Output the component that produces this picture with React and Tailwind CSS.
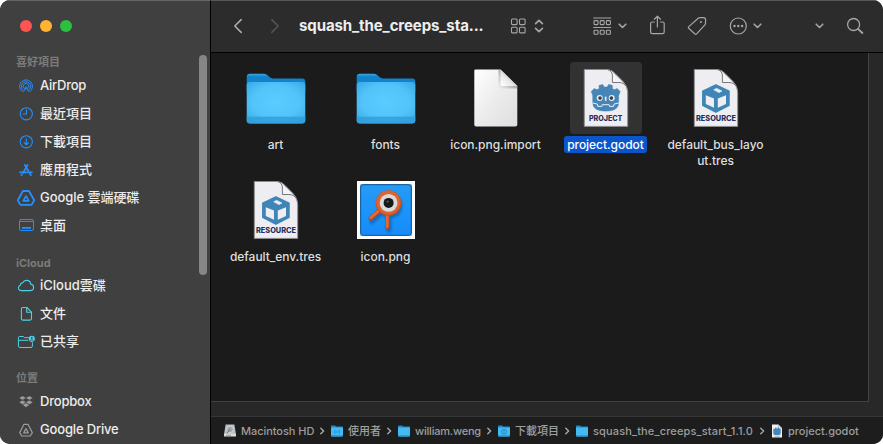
import React from "react";

const SANS = "font-['Inter','Noto_Sans_CJK_TC',sans-serif]";

function Svg({ w, h, vb, className = "", children }) {
  return (
    <svg
      width={w}
      height={h}
      viewBox={vb || `0 0 ${w} ${h}`}
      fill="none"
      stroke="currentColor"
      strokeLinecap="round"
      strokeLinejoin="round"
      className={`block shrink-0 ${className}`}
    >
      {children}
    </svg>
  );
}

/* ---------- sidebar icons (20 x 16 canvas) ---------- */

const AirDropIcon = () => (
  <Svg w={20} h={16}>
    <path d="M6.1 13.6A6.5 6.5 0 1 1 13.9 13.6" strokeWidth="1" />
    <path d="M7.2 12A4.6 4.6 0 1 1 12.8 12" strokeWidth="1" />
    <path d="M8.3 10.4A2.8 2.8 0 1 1 11.7 10.4" strokeWidth="1" />
    <path d="M10 8.3L7.2 14h.2L10 10.2 12.6 14h.2z" fill="currentColor" strokeWidth="0.4" />
  </Svg>
);
const ClockIcon = () => (
  <Svg w={20} h={16}>
    <circle cx="10.3" cy="7.8" r="6.1" strokeWidth="1.1" />
    <path d="M10.5 3.9V8H7.2" strokeWidth="1.1" />
  </Svg>
);
const DownloadIcon = () => (
  <Svg w={20} h={16}>
    <circle cx="10.3" cy="7.8" r="6.1" strokeWidth="1.1" />
    <path d="M10.3 4.7v6M8.1 8.7l2.2 2.2 2.2-2.2" strokeWidth="1.1" />
  </Svg>
);
const AppsIcon = () => (
  <Svg w={20} h={16}>
    <path d="M11.6 3L6.9 11" strokeWidth="1.7" />
    <path d="M8.8 3L14.9 13.3" strokeWidth="1.7" />
    <path d="M4 10.4H11.2M13.8 10.4H16" strokeWidth="1.6" />
    <path d="M5.8 12.7L5.4 13.4" strokeWidth="1.7" />
  </Svg>
);
const DriveIcon = () => (
  <Svg w={20} h={16}>
    <path d="M7 1H13L18.2 10.2 15.6 14.9H4.4L1.8 10.2z" strokeWidth="1.8" />
    <path d="M10 6L12.8 10.9H7.2z" strokeWidth="1.6" />
  </Svg>
);
const DriveSmallIcon = () => (
  <Svg w={20} h={16}>
    <path d="M8 2.3H12L16.3 10.6 14.2 14H5.8L3.7 10.6z" strokeWidth="1.2" />
    <path d="M10 6.6L12.3 10.9H7.7z" strokeWidth="1.2" />
  </Svg>
);
const DesktopIcon = () => (
  <Svg w={20} h={16}>
    <rect x="3.5" y="1.5" width="14" height="11" rx="1.6" strokeWidth="1" />
    <path d="M3.6 3.5H17.4" strokeWidth="1" />
    <rect x="6" y="9" width="9" height="1.8" fill="currentColor" stroke="none" />
  </Svg>
);
const CloudIcon = () => (
  <Svg w={20} h={16}>
    <path
      d="M5.6 12.6C3.6 12.6 2.4 11.4 2.4 9.8C2.4 8.4 3.3 7.5 4.5 7.2C4.3 5.8 5.3 4.8 6.7 4.9C7.4 3.3 8.8 2.4 10.5 2.4C12.7 2.4 14.4 3.9 14.7 6.1C16.4 6.3 17.6 7.6 17.6 9.3C17.6 11.2 16.2 12.6 14.3 12.6Z"
      strokeWidth="1.1"
    />
  </Svg>
);
const DocIcon = () => (
  <Svg w={20} h={16}>
    <path d="M6.6 1.5H10.8L15.5 6.2V12.6Q15.5 14.1 14 14.1H6.9Q5.4 14.1 5.4 12.6V2.9Q5.4 1.5 6.6 1.5z" strokeWidth="1.1" />
    <path d="M10.7 1.7V6.3H15.3" strokeWidth="1.1" />
  </Svg>
);
const SharedIcon = () => (
  <Svg w={20} h={16}>
    <path d="M12.4 3.6H8.4L7.2 2.5H3.7Q2.4 2.5 2.4 3.8V12.1Q2.4 13.5 3.8 13.5H15Q16.4 13.5 16.4 12.1V8.8M2.6 6.3H11.9" strokeWidth="1" />
    <circle cx="15.8" cy="4.8" r="3.1" fill="currentColor" stroke="none" />
    <circle cx="15.8" cy="3.9" r="0.9" fill="#404040" stroke="none" />
    <path d="M14.3 6.5Q15.8 4.9 17.3 6.5" stroke="#404040" strokeWidth="0.8" />
  </Svg>
);
const DropboxIcon = () => (
  <Svg w={20} h={16}>
    <path
      d="M6.6 1.9L10 4 6.6 6.1 3.2 4zM13.4 1.9L16.8 4 13.4 6.1 10 4zM6.6 6.2L10 8.3 6.6 10.4 3.2 8.3zM13.4 6.2L16.8 8.3 13.4 10.4 10 8.3zM6.7 11.1L10 9.1 13.3 11.1 10 13.2z"
      fill="currentColor"
      stroke="#404040"
      strokeWidth="0.2"
    />
  </Svg>
);

function SideHeader({ children, className = "" }) {
  return (
    <div className={`flex h-7 items-center pl-4 text-[11px] font-bold text-[#7b7b7b] ${className}`}>{children}</div>
  );
}

function SideItem({ icon, label, color, track = "" }) {
  return (
    <div className="flex h-7 items-center pl-4">
      <span className={color}>{icon}</span>
      <span className={`ml-1 text-[13px] font-medium whitespace-nowrap text-[#ececec] ${track}`}>{label}</span>
    </div>
  );
}

function Sidebar() {
  const blue = "text-[#2390ff]";
  const cyan = "text-[#49d3e8]";
  const gray = "text-[#9b9b9b]";
  return (
    <aside className="flex w-[211px] shrink-0 flex-col border-r border-black bg-[#404040]">
      <div className="flex h-[51px] shrink-0 items-center gap-2 pl-5">
        <span className="size-3 rounded-full bg-[#ff5450]" />
        <span className="size-3 rounded-full bg-[#ffb332]" />
        <span className="size-3 rounded-full bg-[#2bc040]" />
      </div>
      <div className="flex min-h-0 flex-1 justify-between overflow-hidden">
        <nav className="flex shrink-0 flex-col">
          <SideHeader className="mt-[-3px] mb-[-4px]">喜好項目</SideHeader>
          <SideItem icon={<AirDropIcon />} label="AirDrop" color={blue} track="tracking-[-0.25px]" />
          <SideItem icon={<ClockIcon />} label="最近項目" color={blue} />
          <SideItem icon={<DownloadIcon />} label="下載項目" color={blue} />
          <SideItem icon={<AppsIcon />} label="應用程式" color={blue} />
          <SideItem icon={<DriveIcon />} label="Google 雲端硬碟" color={blue} track="tracking-[-0.05px]" />
          <SideItem icon={<DesktopIcon />} label="桌面" color={blue} />
          <SideHeader className="mt-[9px] mb-[-5px]">iCloud</SideHeader>
          <SideItem icon={<CloudIcon />} label="iCloud雲碟" color={cyan} />
          <SideItem icon={<DocIcon />} label="文件" color={cyan} />
          <SideItem icon={<SharedIcon />} label="已共享" color={cyan} />
          <SideHeader className="mt-2 mb-[-4px]">位置</SideHeader>
          <SideItem icon={<DropboxIcon />} label="Dropbox" color={gray} track="tracking-[-0.2px]" />
          <SideItem icon={<DriveSmallIcon />} label="Google Drive" color={gray} track="tracking-[-0.17px]" />
        </nav>
        <div className="mt-1 mr-[3px] h-[220px] w-2 rounded-full bg-[#868686]" />
      </div>
    </aside>
  );
}

/* ---------- toolbar ---------- */

const Chevron = ({ className = "" }) => (
  <Svg w={9} h={6} className={className}>
    <path d="M1.2 1.2L4.5 4.5 7.8 1.2" strokeWidth="1.6" />
  </Svg>
);

function GroupIcon() {
  const xs = [1, 7.2, 13.4];
  return (
    <Svg w={19} h={19}>
      <path d="M0.7 1H17.7M0.7 10.5H17.7" strokeWidth="1.1" />
      {xs.map((x) => (
        <React.Fragment key={x}>
          <rect x={x} y="3.6" width="4" height="4" rx="0.8" strokeWidth="1.1" />
          <rect x={x} y="13.3" width="4" height="4" rx="0.8" strokeWidth="1.1" />
        </React.Fragment>
      ))}
    </Svg>
  );
}

function Toolbar() {
  return (
    <header className="flex h-[53px] shrink-0 items-center border-b border-black bg-[#2c2c2c] pl-[22px] text-[#a6a6a6]">
      <Svg w={10} h={16} className="text-[#b0b0b0]">
        <path d="M8.2 1.6L1.8 8 8.2 14.4" strokeWidth="1.5" />
      </Svg>
      <Svg w={10} h={16} className="ml-[27px] text-[#555555]">
        <path d="M1.8 1.6L8.2 8 1.8 14.4" strokeWidth="1.5" />
      </Svg>
      <h1 className="ml-[19px] w-[211px] text-[15px] leading-5 font-bold tracking-[-0.1px] whitespace-nowrap text-[#eeeeee]">squash_the_creeps_sta...</h1>
      <Svg w={16} h={16}>
        {[1.5, 9.5].map((x) => (
          <React.Fragment key={x}>
            <rect x={x} y="1" width="5.6" height="5.6" rx="1" strokeWidth="1.1" />
            <rect x={x} y="9.3" width="5.6" height="5.6" rx="1" strokeWidth="1.1" />
          </React.Fragment>
        ))}
      </Svg>
      <Svg w={10} h={14} className="ml-2">
        <path d="M1.6 4.6L5 1.4 8.4 4.6M1.6 9.4L5 12.6 8.4 9.4" strokeWidth="1.7" />
      </Svg>
      <div className="ml-[49px]">
        <GroupIcon />
      </div>
      <Chevron className="ml-[6px]" />
      <Svg w={16} h={20} className="mt-[-3px] ml-[22px]">
        <path d="M5.4 7H3.4Q1.6 7 1.6 8.6V17.1Q1.6 18.7 3.2 18.7H13.6Q15.2 18.7 15.2 17.1V8.6Q15.2 7 13.6 7H11.4M8.4 12V1.4M5.3 4.2L8.4 1.2 11.5 4.2" strokeWidth="1.2" />
      </Svg>
      <Svg w={20} h={20} className="ml-[22px]">
        <path d="M11.2 2.3Q11.8 1.7 12.7 1.7L16.4 1.6Q18.6 1.6 18.6 3.8L18.5 7.4Q18.5 8.3 17.9 8.9L9.6 17.9Q8.7 18.8 7.7 17.8L1.7 12.3Q0.9 11.5 1.8 10.6z" strokeWidth="1.2" />
        <circle cx="13.9" cy="6" r="1" fill="currentColor" stroke="none" />
      </Svg>
      <Svg w={18} h={18} className="ml-[22px]">
        <circle cx="9.3" cy="9" r="8" strokeWidth="1.2" />
        <g fill="currentColor" stroke="none">
          <circle cx="5.5" cy="9" r="1.2" />
          <circle cx="9.3" cy="9" r="1.2" />
          <circle cx="13.1" cy="9" r="1.2" />
        </g>
      </Svg>
      <Chevron className="ml-[6px]" />
      <Chevron className="ml-[53px]" />
      <Svg w={18} h={18} className="ml-[22px]">
        <circle cx="7.6" cy="7.5" r="6" strokeWidth="1.3" />
        <path d="M12.2 12.1L16.4 16" strokeWidth="1.8" />
      </Svg>
    </header>
  );
}

/* ---------- file icons ---------- */

function Folder() {
  return (
    <svg width="60" height="54" viewBox="0 0 60 54" className="mt-0.5 block">
      <defs>
        <radialGradient id="folderFront" cx="0.5" cy="0.48" r="0.68">
          <stop offset="0" stopColor="#5accff" />
          <stop offset="0.6" stopColor="#52c4fa" />
          <stop offset="1" stopColor="#38a9e4" />
        </radialGradient>
        <linearGradient id="folderBack" x1="0" y1="0" x2="0" y2="1">
          <stop offset="0" stopColor="#41a8e2" />
          <stop offset="0.16" stopColor="#1283cb" />
          <stop offset="1" stopColor="#1283cb" />
        </linearGradient>
      </defs>
      <path d="M0.7 5Q0.7 1.7 4 1.7H17.5Q19.6 1.7 21.2 3L23.4 5Q25 6.4 27 6.4H56Q59.3 6.4 59.3 9.7V20H0.7z" fill="url(#folderBack)" />
      <path d="M0.7 12.9Q0.7 9.9 3.7 9.9H56.3Q59.3 9.9 59.3 12.9V48.3Q59.3 51.6 56 51.6H4Q0.7 51.6 0.7 48.3z" fill="url(#folderFront)" />
      <path d="M0.7 45H59.3V48.3Q59.3 51.6 56 51.6H4Q0.7 51.6 0.7 48.3z" fill="#2d9cda" fillOpacity="0.75" />
      <path d="M0.7 45H59.3" stroke="#329fd9" strokeWidth="0.6" />
    </svg>
  );
}

function BlankDoc() {
  return (
    <svg width="46" height="60" viewBox="0 0 46 60" className="block">
      <defs>
        <linearGradient id="blankPage" x1="0" y1="0" x2="1" y2="1">
          <stop offset="0" stopColor="#ffffff" />
          <stop offset="0.5" stopColor="#ececec" />
          <stop offset="1" stopColor="#dedede" />
        </linearGradient>
        <linearGradient id="blankCurl" x1="0.05" y1="0.95" x2="0.6" y2="0.4">
          <stop offset="0" stopColor="#ffffff" />
          <stop offset="0.65" stopColor="#e6e6e6" />
          <stop offset="1" stopColor="#bdbdbd" />
        </linearGradient>
        <linearGradient id="curlShade" x1="1" y1="0" x2="0" y2="1">
          <stop offset="0.5" stopColor="#777777" stopOpacity="0.55" />
          <stop offset="1" stopColor="#999999" stopOpacity="0" />
        </linearGradient>
      </defs>
      <path d="M2.6 1.5H27.5L44.3 18V56.6Q44.3 58.6 42.3 58.6H3.1Q1.3 58.6 1.3 56.8V2.8Q1.3 1.5 2.6 1.5z" fill="url(#blankPage)" />
      <path d="M25.5 1.5H27.5L44.3 18V20.5H28Q25.5 20.5 25.5 18z" fill="url(#curlShade)" />
      <path d="M27.5 1.5L44.3 18H29.5Q27.5 18 27.5 16z" fill="url(#blankCurl)" />
    </svg>
  );
}

function Robot() {
  return (
    <g transform="translate(-0.6 -0.3)">
      <path
        d="M10.4 35V28L8.9 23.8 11.8 20.9 14.6 22 16.8 20.9 16.6 17.8 20.3 16.7 21.8 19.4H24.8L26.3 16.7 30 17.8 29.8 20.9 32 22 34.8 20.9 37.7 23.8 36.2 28V35Q36.2 43.4 23.3 43.4 10.4 43.4 10.4 35z"
        fill="#4586b6"
        stroke="#4586b6"
        strokeWidth="0.6"
        strokeLinejoin="round"
      />
      <circle cx="17.3" cy="30.3" r="3" fill="#eeeef2" />
      <circle cx="29.3" cy="30.3" r="3" fill="#eeeef2" />
      <circle cx="17.6" cy="30.4" r="1.8" fill="#3b3c42" />
      <circle cx="29" cy="30.4" r="1.8" fill="#3b3c42" />
      <path d="M23.3 29.6V32.6" stroke="#eeeef2" strokeWidth="1.6" strokeLinecap="round" />
      <path d="M9.9 35.2L15 36.4 15.4 38.7H19.4L19.8 37H26.8L27.2 38.7H31.2L31.6 36.4 36.7 35.2" fill="none" stroke="#eeeef2" strokeWidth="1" />
    </g>
  );
}

function Cube() {
  return (
    <>
      <path d="M22.9 16.9L36 23.2V37.4L22.9 44.2 9.8 37.4V23.2z" fill="#3f85b8" stroke="#3f85b8" strokeWidth="1.5" strokeLinejoin="round" />
      <path d="M12.8 27.2L21 30.6V39.8L12.8 35.9z" fill="#eeeef2" />
      <path d="M33 27.2L24.8 30.6V39.8L33 35.9z" fill="#eeeef2" />
      <path d="M20.8 21.8L23.6 20.4 28.8 23 26 24.5z" fill="#eeeef2" stroke="#eeeef2" strokeWidth="0.8" strokeLinejoin="round" />
    </>
  );
}

function GodotDoc({ kind }) {
  const project = kind === "PROJECT";
  return (
    <svg width="46" height="60" viewBox="0 0 46 60" className="block">
      <path d="M1.3 1.5H24.5Q29.5 2 32.5 6L40 13.5Q44.5 18 44.7 24V58.4H1.3z" fill="#eeeef2" stroke="#8d8d91" strokeWidth="1" />
      <path d="M24.5 1.5Q29.5 3 29.4 8V14.5H36Q41 14.5 43.6 19" fill="#f5f5f8" stroke="#77777b" strokeWidth="1" />
      {project ? <Robot /> : <Cube />}
      <text
        x={project ? 5.9 : 3}
        y="53"
        textLength={project ? 33.5 : 40}
        lengthAdjust="spacingAndGlyphs"
        fontSize="7.3"
        fontWeight="800"
        fill="#252f5e"
        className="font-['Inter',sans-serif]"
      >
        {kind}
      </text>
    </svg>
  );
}

function SpriteImage() {
  return (
    <svg width="58" height="58" viewBox="0 0 58 58" className="block">
      <defs>
        <linearGradient id="spriteBg" x1="0" y1="0" x2="0" y2="1">
          <stop offset="0" stopColor="#259cf5" />
          <stop offset="1" stopColor="#158cfb" />
        </linearGradient>
        <filter id="spriteShadow" x="-30%" y="-30%" width="160%" height="160%">
          <feGaussianBlur stdDeviation="1.1" />
        </filter>
      </defs>
      <rect width="58" height="58" fill="#ffffff" />
      <rect x="3" y="3" width="52" height="52" fill="#a9c6dc" />
      <rect x="3.6" y="3.6" width="50.8" height="50.8" rx="3.5" fill="url(#spriteBg)" stroke="#1c639f" strokeWidth="1.2" />
      <g filter="url(#spriteShadow)" opacity="0.45" transform="translate(1.5 3)">
        <circle cx="31.5" cy="22" r="12.5" fill="#123f70" />
        <path d="M22 30L13.5 37.5M30.5 34V46" stroke="#123f70" strokeWidth="5" strokeLinecap="round" />
      </g>
      <path d="M22 30L13.8 37.2M30.4 34V46" stroke="#a74a28" strokeWidth="4.8" strokeLinecap="round" />
      <path d="M22 29.6L13.8 36.6M30.2 34V45.6" stroke="#dd6a38" strokeWidth="3" strokeLinecap="round" />
      <circle cx="31.5" cy="22" r="12.8" fill="#c95426" />
      <circle cx="31.3" cy="21.4" r="11.8" fill="#dc6432" />
      <circle cx="31.6" cy="21.9" r="8.9" fill="#dadad8" />
      <circle cx="31.6" cy="21.9" r="5" fill="#15191d" />
      <circle cx="30.6" cy="20.6" r="1.2" fill="#4a4f55" />
    </svg>
  );
}

function FileCell({ icon, lines, selected }) {
  return (
    <div className="flex h-28 flex-col items-center">
      <div className={`flex size-[72px] shrink-0 items-center justify-center rounded-[4px] ${selected ? "bg-[#323232]" : ""}`}>{icon}</div>
      <div className={`mt-0.5 mr-px rounded-[3px] px-[3px] text-center text-[12px] font-medium tracking-[-0.04px] ${selected ? "bg-[#0b55ca] text-white" : "text-[#dedede]"}`}>
        {lines.map((line) => (
          <div key={line} className="h-4 leading-[15px] whitespace-nowrap first:h-[17px] first:leading-[17px]">
            {line}
          </div>
        ))}
      </div>
    </div>
  );
}

/* ---------- path bar ---------- */

function MiniFolder({ children }) {
  return (
    <svg width="12" height="12" viewBox="0 0 12 12" className="block shrink-0">
      <path d="M0 1.4Q0 0.6 0.8 0.6H4L5.2 1.5H11.2Q12 1.5 12 2.3V5H0z" fill="#2489c8" />
      <path d="M0 3Q0 2.4 0.6 2.4H11.4Q12 2.4 12 3V10.6Q12 11.4 11.2 11.4H0.8Q0 11.4 0 10.6z" fill="#45baf2" />
      <path d="M0 10H12V10.6Q12 11.4 11.2 11.4H0.8Q0 11.4 0 10.6z" fill="#2b9ddb" />
      {children}
    </svg>
  );
}

const UsersFolder = () => (
  <MiniFolder>
    <path d="M4.3 5Q2.7 6.8 4.3 8.6M7.7 5Q9.3 6.8 7.7 8.6M6 5.8V7.8" fill="none" stroke="#1d83c0" strokeWidth="0.9" />
  </MiniFolder>
);
const DownloadsFolder = () => (
  <MiniFolder>
    <circle cx="6" cy="6.8" r="2.4" fill="none" stroke="#1d83c0" strokeWidth="0.9" />
    <path d="M6 5.6V7.8" stroke="#1d83c0" strokeWidth="0.9" />
  </MiniFolder>
);
const DiskIcon = () => (
  <svg width="12" height="13" viewBox="0 0 12 13" className="mt-[-1px] block shrink-0">
    <path d="M1.6 0.6H10.4L12 10.5H0z" fill="#b9bec0" />
    <path d="M0 9.7H12V12Q12 12.6 11.4 12.6H0.6Q0 12.6 0 12z" fill="#dadcdd" />
    <circle cx="6" cy="5.3" r="3.4" fill="#a0a9ad" stroke="#e2e5e6" strokeWidth="0.7" />
    <path d="M6 5.3L3 9" stroke="#5f696d" strokeWidth="1" />
    <path d="M2 11.3H7" stroke="#7d8385" strokeWidth="0.7" />
  </svg>
);
const MiniDoc = () => (
  <svg width="12" height="14" viewBox="0 0 12 14" className="block shrink-0">
    <path d="M1 0.4H7.4L11 4V13.6H1z" fill="#eceff1" />
    <path d="M7.4 0.4V4H11" fill="none" stroke="#9b9b9b" strokeWidth="0.6" />
    <path d="M2.3 4.6L3.6 5 4.4 3.6H5.2L5.6 4.4H6.5L6.9 3.6H7.7L8.4 5 9.7 4.6V9.4Q9.5 10.9 6 10.9 2.5 10.9 2.3 9.4z" fill="#4586b6" />
    <path d="M3.5 12.2H8.6" stroke="#8d93a6" strokeWidth="0.7" />
  </svg>
);
const Sep = () => (
  <Svg w={5} h={8} className="mr-[6px] text-[#a8a8a8]">
    <path d="M0.8 1.2L3.6 4 0.8 6.8" strokeWidth="1.4" />
  </Svg>
);

function Crumb({ icon, label, width, last, track = "" }) {
  return (
    <>
      {icon}
      <span className={`ml-[5px] shrink-0 whitespace-nowrap ${width} ${track}`}>{label}</span>
      {!last && <Sep />}
    </>
  );
}

export default function App() {
  return (
    <div className={`h-[444px] w-[883px] overflow-hidden bg-white ${SANS}`}>
      <div className="relative flex h-full w-full overflow-hidden rounded-[10px] bg-[#1b1b1b]">
        <Sidebar />
        <main className="flex min-w-0 flex-1 flex-col">
          <Toolbar />
          <div className="flex h-[363px] shrink-0 flex-col bg-[#282828]">
            <div className="mr-[14px] h-[349px] border-r border-b border-[#414141] bg-[#1b1b1b] pt-[9px] pl-[10px]">
              <div className="grid w-[550px] grid-cols-5">
                <FileCell icon={<Folder />} lines={["art"]} />
                <FileCell icon={<Folder />} lines={["fonts"]} />
                <FileCell icon={<BlankDoc />} lines={["icon.png.import"]} />
                <FileCell icon={<GodotDoc kind="PROJECT" />} lines={["project.godot"]} selected />
                <FileCell icon={<GodotDoc kind="RESOURCE" />} lines={["default_bus_layo", "ut.tres"]} />
                <FileCell icon={<GodotDoc kind="RESOURCE" />} lines={["default_env.tres"]} />
                <FileCell icon={<SpriteImage />} lines={["icon.png"]} />
              </div>
            </div>
          </div>
          <footer className="flex flex-1 items-center border-t border-[#363636] bg-[#1d1d1d] pl-[13px] text-[11px] leading-4 font-medium text-[#9e9e9e]">
            <Crumb icon={<DiskIcon />} label="Macintosh HD" width="w-[79px]" track="tracking-[-0.05px]" />
            <Crumb icon={<UsersFolder />} label="使用者" width="w-[39px]" />
            <Crumb icon={<MiniFolder />} label="william.weng" width="w-[72px]" track="tracking-[-0.2px]" />
            <Crumb icon={<DownloadsFolder />} label="下載項目" width="w-[50px]" />
            <Crumb icon={<MiniFolder />} label="squash_the_creeps_start_1.1.0" width="w-[167px]" track="tracking-[0.14px]" />
            <Crumb icon={<MiniDoc />} label="project.godot" width="w-[80px]" last />
          </footer>
        </main>
        <div className="pointer-events-none absolute inset-x-0 top-0 h-px bg-white/20" />
      </div>
    </div>
  );
}
